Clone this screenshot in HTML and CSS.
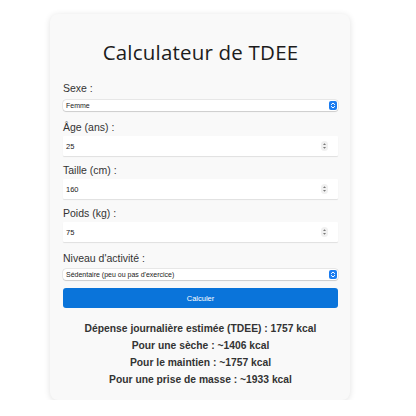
FILE: index.html
```html
<!DOCTYPE html>
<html lang="fr">
<head>
<meta charset="utf-8">
<title>Calculateur de TDEE</title>
<link rel="stylesheet" href="styles.css">
</head>
<body>
<div class="card">
  <h1 class="title">Calculateur de TDEE</h1>
  <div class="field field-select">
    <div class="label">Sexe :</div>
    <div class="select">
      <span class="value">Femme</span>
      <svg class="stepper" width="8" height="9" viewBox="0 0 8 9"><rect x="0" y="0" width="8" height="9" rx="2" fill="#1a7cf0"/><path d="M2.3 3.6 L4 2 L5.7 3.6 M2.3 5.4 L4 7 L5.7 5.4" stroke="#fff" stroke-width="1" fill="none" stroke-linecap="round" stroke-linejoin="round"/></svg>
    </div>
  </div>
  <div class="field">
    <div class="label">Âge (ans) :</div>
    <div class="input">
      <span class="value">25</span>
      <svg class="spin" width="7" height="10" viewBox="0 0 7 10"><rect x="0" y="0" width="7" height="10" rx="3.5" fill="#f0f0f0"/><path d="M2 4 L3.5 2.3 L5 4 Z M2 6 L3.5 7.7 L5 6 Z" fill="#777"/></svg>
    </div>
  </div>
  <div class="field">
    <div class="label">Taille (cm) :</div>
    <div class="input">
      <span class="value">160</span>
      <svg class="spin" width="7" height="10" viewBox="0 0 7 10"><rect x="0" y="0" width="7" height="10" rx="3.5" fill="#f0f0f0"/><path d="M2 4 L3.5 2.3 L5 4 Z M2 6 L3.5 7.7 L5 6 Z" fill="#777"/></svg>
    </div>
  </div>
  <div class="field field-last-input">
    <div class="label">Poids (kg) :</div>
    <div class="input">
      <span class="value">75</span>
      <svg class="spin" width="7" height="10" viewBox="0 0 7 10"><rect x="0" y="0" width="7" height="10" rx="3.5" fill="#f0f0f0"/><path d="M2 4 L3.5 2.3 L5 4 Z M2 6 L3.5 7.7 L5 6 Z" fill="#777"/></svg>
    </div>
  </div>
  <div class="field field-select field-activity">
    <div class="label">Niveau d'activité :</div>
    <div class="select">
      <span class="value">Sédentaire (peu ou pas d'exercice)</span>
      <svg class="stepper" width="8" height="9" viewBox="0 0 8 9"><rect x="0" y="0" width="8" height="9" rx="2" fill="#1a7cf0"/><path d="M2.3 3.6 L4 2 L5.7 3.6 M2.3 5.4 L4 7 L5.7 5.4" stroke="#fff" stroke-width="1" fill="none" stroke-linecap="round" stroke-linejoin="round"/></svg>
    </div>
  </div>
  <button class="button">Calculer</button>
  <div class="results">
    <p>Dépense journalière estimée (TDEE) : 1757 kcal</p>
    <p>Pour une sèche : ~1406 kcal</p>
    <p>Pour le maintien : ~1757 kcal</p>
    <p>Pour une prise de masse : ~1933 kcal</p>
  </div>
</div>
</body>
</html>
```
FILE: styles.css
```css
html, body {
  margin: 0;
  padding: 0;
  background: #ffffff;
}
body {
  font-family: "Liberation Sans", Arial, sans-serif;
  color: #333;
}
.card {
  box-sizing: border-box;
  width: 300px;
  margin: 14px 0 0 50px;
  padding: 26px 12px 12px 13px;
  background: #f9f9f9;
  border-radius: 8px;
  box-shadow: 0 1px 6px rgba(0, 0, 0, 0.12);
}
.title {
  margin: 0 0 17px;
  font-family: "Open Sans", sans-serif;
  font-weight: 500;
  font-size: 20.5px;
  line-height: 24px;
  text-align: center;
  color: #1c1c1c;
  letter-spacing: 0.2px;
}
.field {
  display: flex;
  flex-direction: column;
  margin-bottom: 7px;
}
.label {
  font-size: 10.5px;
  line-height: 14px;
  color: #333;
  margin-bottom: 2px;
}
.field-select .label {
  margin-bottom: 5px;
}
.field-select {
  margin-bottom: 9px;
}
.field-last-input {
  margin-bottom: 9px;
}
.field-activity .label {
  margin-bottom: 4px;
}
.field-activity {
  margin-bottom: 8px;
}
.select {
  display: flex;
  align-items: center;
  justify-content: space-between;
  height: 11px;
  padding: 0 1px 0 3px;
  background: #fff;
  border-radius: 3px;
  box-shadow: 0 0 0 0.5px rgba(0, 0, 0, 0.12), 0 0.5px 1px rgba(0, 0, 0, 0.12);
  font-size: 7px;
  color: #222;
}
.input {
  display: flex;
  align-items: center;
  justify-content: space-between;
  height: 20px;
  padding: 0 10px 0 3px;
  background: #fff;
  border-radius: 1px;
  box-shadow: 0 1px 1px rgba(0, 0, 0, 0.1);
  font-size: 7.5px;
  color: #222;
}
.button {
  display: block;
  width: 100%;
  height: 20px;
  margin: 0;
  padding: 0;
  border: none;
  border-radius: 3px;
  background: #0a74da;
  color: #fff;
  font-family: "Liberation Sans", Arial, sans-serif;
  font-size: 7.5px;
}
.results {
  margin-top: 12px;
  text-align: center;
}
.results p {
  margin: 0;
  font-size: 10.3px;
  line-height: 17px;
  font-weight: 700;
  color: #333;
}
```
